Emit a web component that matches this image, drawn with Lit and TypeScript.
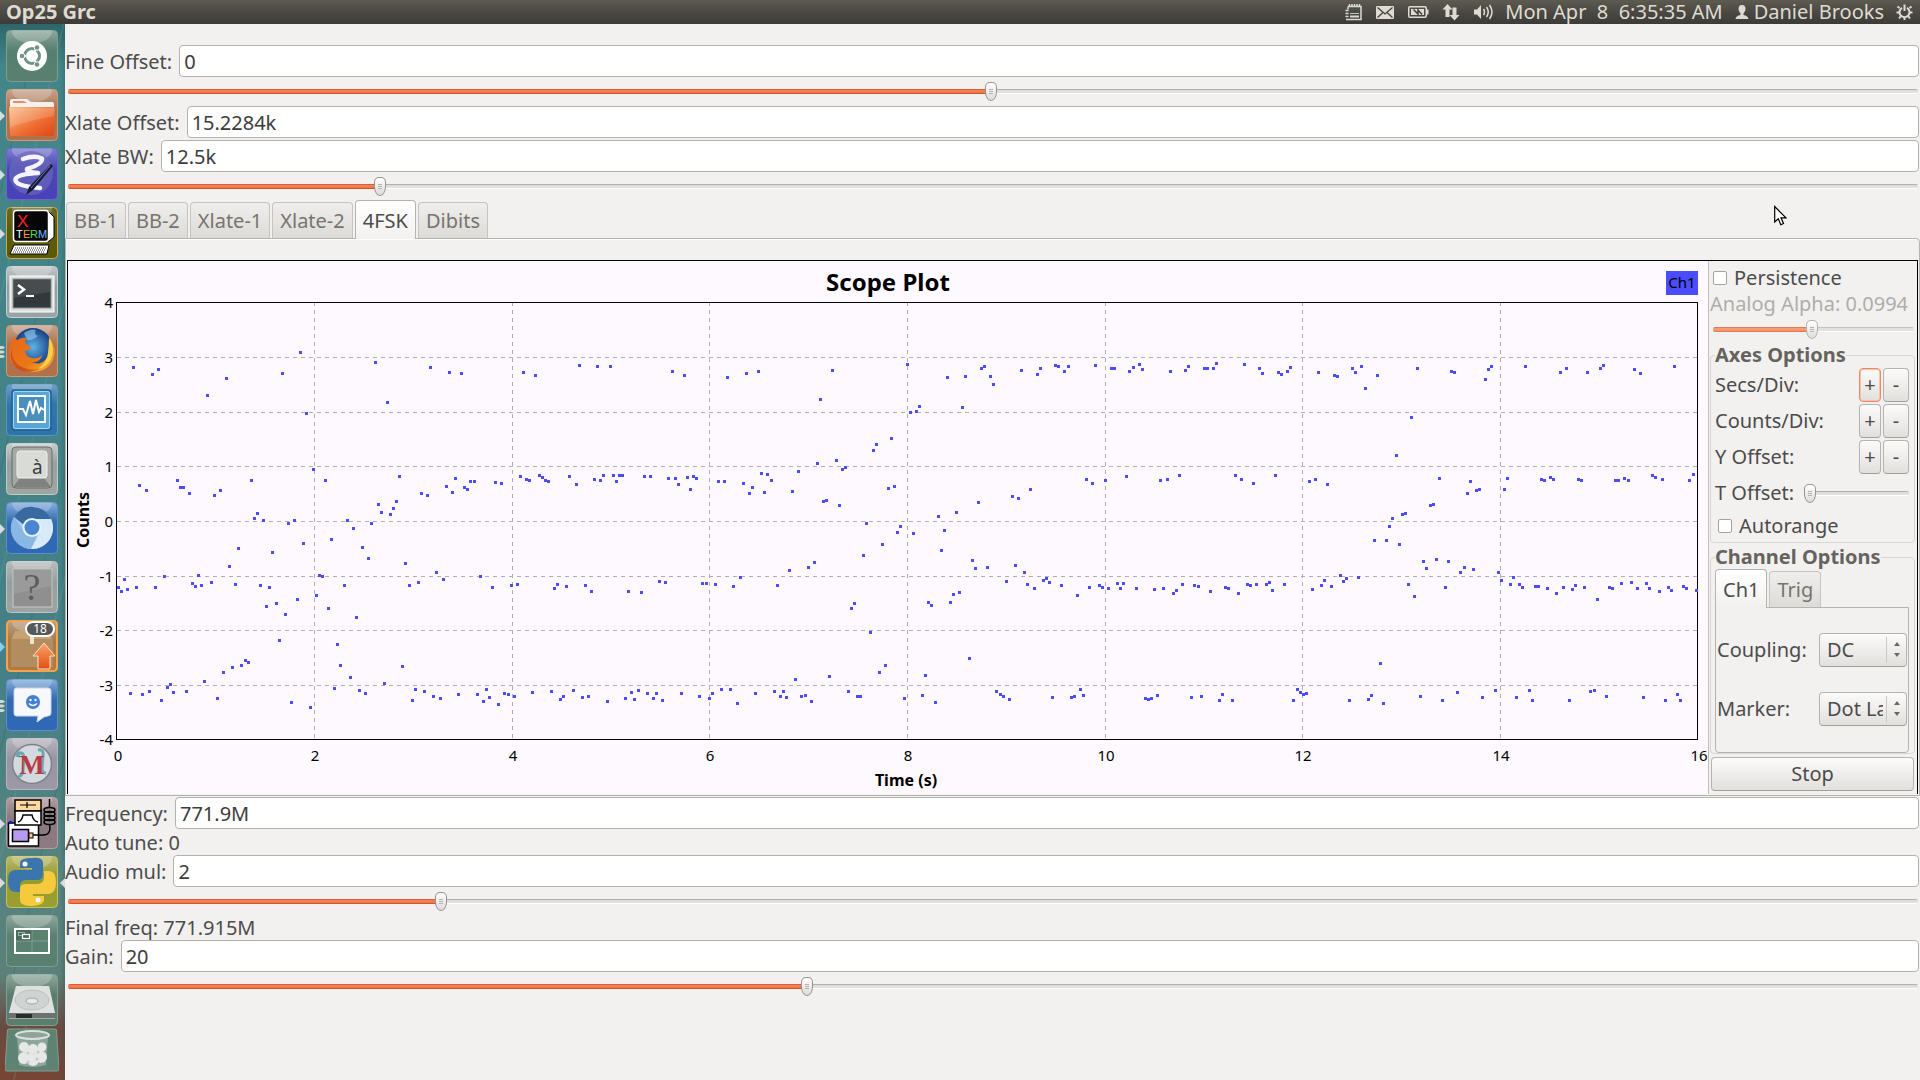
import { LitElement, html, svg, css, nothing } from "lit";
import type { TemplateResult } from "lit";
import { customElement, property, state } from "lit/decorators.js";
import { classMap } from "lit/directives/class-map.js";
import { styleMap } from "lit/directives/style-map.js";

/* ------------------------------------------------------------------ */
/* Scope trace: samples grouped by tile of the plotting area. Each tile */
/* has its own origin; samples are stored as "x,y" in raster units.     */
/* ------------------------------------------------------------------ */

interface Tile {
  x: number;
  y: number;
  samples: string;
}

const RASTER_X = 2.8;
const RASTER_Y = 3;

const TILES: Tile[] = [
  {
    x: -8,
    y: -1,
    samples:
      "206,322 259,343 276,328 413,406 466,355 623,340 673,277 690,460 883,307 917,427 1037,322 1090,337 1124,340 1298,337 1331,346 1454,316 1505,319 222,676 242,691 329,661 337,682 346,682 362,700 432,706 449,691 536,661 545,775 553,760 570,781 640,790 656,781 710,628 743,661 805,781 822,805 872,790 892,733 900,757 925,763 934,745 942,724 950,649 1012,700 1029,706 1082,679 1099,697 1107,655 1132,682 1141,688 1149,664 1160,664 1219,667 1236,670 1289,649 1306,658 1314,661 1342,646 1351,652 1359,661 1368,664 1426,649 1446,673 1496,658",
  },
  {
    x: -8,
    y: 269,
    samples:
      "164,172 172,184 180,148 189,178 214,172 267,172 292,139 371,160 379,169 388,136 396,166 424,157 474,109 491,163 500,55 561,166 578,229 586,172 595,67 606,220 614,331 631,253 665,208 682,40 717,196 727,136 735,139 752,235 760,28 777,343 785,406 796,166 813,442 830,262 838,481 847,52 855,490 864,85 908,460 959,409 967,100 978,166 987,511 995,478 1004,157 1020,484 1046,499 1054,127 1065,505 1074,148 1116,493 1169,493 1177,139 1186,514 1194,478 1202,502 1211,172 1228,523 1244,490 1256,493 1264,166 1272,499 1281,163 1323,487 1376,484 1384,175 1393,163 1401,508 1410,499 1418,169 1438,481 1463,502 1471,166 1480,499 1488,184 197,490 231,493 250,484 284,511 301,472 309,463 318,487 354,484 404,454 441,505 458,427 483,412 508,406 519,391 528,397 648,517 701,532 768,475",
  },
  {
    x: 532,
    y: -1,
    samples:
      "29,319 203,334 236,346 357,352 410,340 444,334 617,418 651,331 861,313 869,457 886,454 894,439 973,352 1015,442 1023,349 1068,325 1076,319 1093,349 1102,373 1180,331 1225,343 1233,325 1275,316 1284,319 1300,334 1312,319 1387,316 1432,325 1440,325 1482,334 1494,322 1510,313 1519,328 766,571 774,553 816,535 662,601 609,610 679,628 687,622 556,634 539,694 626,724 634,721 670,736 746,790 808,685 824,679 833,817 841,799 878,820 948,769 964,811 998,757 1060,727 1155,709 1172,715 1205,688 1362,658 1379,670 1415,661 1474,649 2,661 10,646 38,646 46,664 54,646 62,646 124,649 141,649 192,655 211,655 220,673 245,652 253,688 262,649 270,655 332,664 348,664 402,670 418,700 427,682 452,640 460,697 469,643 480,661",
  },
  {
    x: 532,
    y: 269,
    samples:
      "80,184 116,187 166,154 183,157 287,160 298,160 323,163 374,169 393,142 497,166 530,121 584,112 600,97 704,235 712,220 738,76 757,307 791,43 782,427 799,406 642,439 547,448 21,514 71,505 88,487 96,508 108,481 133,490 150,505 158,490 175,511 228,490 278,499 306,505 315,490 340,478 365,478 385,520 435,490 488,484 505,499 514,484 522,502 564,499 575,496 592,514 696,484 721,499 730,499 852,505 903,496 911,436 939,517 920,217 928,226 956,61 981,217 990,193 1006,187 1034,385 1043,91 1051,115 1085,112 1138,154 1163,106 1188,127 1197,163 1216,175 1242,151 1250,145 1258,157 1292,166 1337,196 1370,172 1398,166 1407,172 1424,175 1449,160 1457,175 1466,160 1502,175 1110,484 1121,493 1130,499 1146,508 1267,502 1320,502 1328,499 1345,478 1354,496 1527,505 1536,508",
  },
  {
    x: 1082,
    y: -1,
    samples:
      "57,334 99,331 108,319 152,325 161,325 178,325 186,310 264,313 306,325 315,340 360,337 368,343 385,334 393,322 472,337 516,346 525,349 567,325 575,337 592,319 603,385 637,346 749,325 732,472 690,586 844,334 852,337 939,358 948,328 956,319 1051,319 1149,337 1166,325 1225,337 1262,325 1270,316 1356,328 1373,340 1468,319 29,661 49,658 82,646 239,646 256,658 290,670 351,646 446,664 463,658 497,673 810,655 889,700 897,664 914,691 922,688 992,688 1001,655 1096,658 1104,661 1121,652 1130,658 1200,658 1208,661 1303,661 1312,661 1328,655 1340,661 1407,646 1415,652 1435,658 1510,661 1522,643 785,736 794,733 707,763 715,760 679,775 670,799",
  },
  {
    x: 1082,
    y: 269,
    samples:
      "12,178 38,175 66,190 74,181 91,163 124,166 136,169 169,184 211,172 220,175 248,190 273,163 281,166 298,163 326,163 334,157 343,181 376,163 455,178 480,166 488,151 508,169 533,136 542,154 550,145 584,142 628,31 662,31 698,43 724,163 740,199 766,94 774,115 802,88 836,94 827,172 869,127 880,112 906,118 976,127 984,151 1009,163 1018,142 1034,163 1043,172 1079,169 1088,169 1113,175 1138,190 1158,172 1183,178 1191,166 1216,172 1253,208 1286,172 1295,175 1320,160 1348,157 1365,175 1390,160 1398,175 1426,184 1452,172 1460,181 1494,169 1502,175 1530,181 4,505 21,496 116,502 144,499 194,511 203,493 231,511 402,511 413,478 421,487 430,493 438,490 558,511 612,508 620,496 645,400 654,520 757,499 819,511 861,487 931,502 967,481 1026,502 1062,481 1071,511 1174,511 1233,484 1245,481 1278,499 1382,502 1443,511 1477,493 1485,511",
  },
];

const tracePath = TILES.map((tile) =>
  tile.samples
    .split(" ")
    .map((pair) => {
      const [x, y] = pair.split(",").map(Number);
      const px = Math.floor(x / RASTER_X) + tile.x - 1;
      const py = Math.floor(y / RASTER_Y) + tile.y - 1;
      return `M${px} ${py}h3v3h-3z`;
    })
    .join(""),
).join("");

/* ------------------------------------------------------------------ */
/* Slider                                                               */
/* ------------------------------------------------------------------ */

@customElement("gtk-slider")
export class GtkSlider extends LitElement {
  @property() label = "";
  @property({ type: Number }) value = 0;
  @property({ type: Boolean }) disabled = false;

  static styles = css`
    :host {
      display: flex;
      align-items: center;
      min-width: 0;
    }
    .range {
      appearance: none;
      display: block;
      width: 100%;
      height: 19px;
      margin: 0;
      background: transparent;
      outline: none;
    }
    .range::-webkit-slider-runnable-track {
      box-sizing: border-box;
      height: 5px;
      border-radius: 2px;
      background:
        linear-gradient(#d95f33, #d95f33) 0 0 / var(--fill) 1px no-repeat,
        linear-gradient(#d1552a, #d1552a) 0 4px / var(--fill) 1px no-repeat,
        linear-gradient(#f58a5f, #ef6f42) 0 0 / var(--fill) 5px no-repeat,
        linear-gradient(#b2afac 1px, #dedcda 1px, #e4e2e0 4px, #ffffff 4px);
    }
    .range::-webkit-slider-thumb {
      appearance: none;
      box-sizing: border-box;
      width: 12px;
      height: 19px;
      margin-top: -7px;
      border: 1px solid #979490;
      border-radius: 5px 5px 6px 6px / 5px 5px 9px 9px;
      background:
        linear-gradient(#b5b2af, #b5b2af) 3px 6px / 4px 1px no-repeat,
        linear-gradient(#b5b2af, #b5b2af) 3px 8px / 4px 1px no-repeat,
        linear-gradient(#b5b2af, #b5b2af) 3px 10px / 4px 1px no-repeat,
        linear-gradient(#ffffff, #dedcda);
    }
    .range:disabled::-webkit-slider-runnable-track {
      background:
        linear-gradient(#e27a52, #e27a52) 0 0 / var(--fill) 1px no-repeat,
        linear-gradient(#e27a52, #e27a52) 0 4px / var(--fill) 1px no-repeat,
        linear-gradient(#f6a27c, #f29068) 0 0 / var(--fill) 5px no-repeat,
        linear-gradient(#c4c1be 1px, #e2e0de 1px, #e6e4e2 4px, #ffffff 4px);
    }
    .range:disabled::-webkit-slider-thumb {
      border-color: #b5b2af;
    }
  `;

  render() {
    return html`<input
      class="range"
      type="range"
      min="0"
      max="100"
      step="any"
      aria-label=${this.label}
      .value=${String(this.value)}
      ?disabled=${this.disabled}
      style=${styleMap({ "--fill": `${this.value}%` })}
      @input=${(e: Event) => {
        this.value = Number((e.target as HTMLInputElement).value);
      }}
    />`;
  }
}

/* ------------------------------------------------------------------ */
/* Top panel                                                            */
/* ------------------------------------------------------------------ */

@customElement("top-panel")
export class TopPanel extends LitElement {
  static styles = css`
    :host {
      display: flex;
      align-items: center;
      justify-content: space-between;
      height: 24px;
      padding: 0 7px 0 6px;
      background: linear-gradient(#5d5a4f, #4b4943 50%, #3c3b37);
      color: #dfdbd2;
      font-size: 20px;
      line-height: 24px;
    }
    .title {
      margin: 0;
      font-size: 20px;
      font-weight: bold;
      line-height: 24px;
    }
    .tray {
      display: flex;
      align-items: center;
      gap: 12px;
      white-space: pre;
    }
    .indicators {
      display: flex;
      gap: 13px;
    }
    .entry {
      display: flex;
      align-items: center;
      gap: 5px;
    }
    .glyph {
      display: block;
      height: 20px;
      fill: #dfdbd2;
      stroke: none;
    }
    .line {
      fill: none;
      stroke: #dfdbd2;
    }
    .cut {
      fill: none;
      stroke: #45433d;
    }
    .teal {
      fill: #9fd0cf;
    }
  `;

  render() {
    return html`
      <h1 class="title">Op25 Grc</h1>
      <div class="tray">
        <div class="indicators">
          <svg class="glyph" width="19" viewBox="0 0 19 20" aria-hidden="true">
            <path class="line" stroke-width="1.5" d="M4 4.5h13v13H3.500M4 4.500v3M1.500 8.500h3M1.500 11.500h3M1.500 14.500h3M2 17.500h3" />
            <path class="line" stroke-width="1.500" d="M5.500 5V2M8 5V2M10.500 5V2M13 5V2M15.500 5V2" />
            <path d="M6 13.500h9v2H6z" />
            <path class="teal" d="M6 11h9v1H6z" />
          </svg>
          <svg class="glyph" width="19" viewBox="0 0 19 20" aria-hidden="true">
            <rect y="4" width="18" height="13" rx="1" />
            <path class="cut" stroke-width="1.300" d="M1.500 5.500L9 12l7.500-6.500M1.500 15.500L7 10.500M16.500 15.500L11 10.500" />
          </svg>
          <svg class="glyph" width="21" viewBox="0 0 21 20" aria-hidden="true">
            <path fill-rule="evenodd" d="M2 4h15q2 0 2 2v1.500h1.500v5H19V14q0 2-2 2H2q-2 0-2-2V6q0-2 2-2zm0 1.500Q1.500 5.500 1.500 6v8q0 .5.5.5h15q.5 0 .5-.5V6q0-.5-.5-.5z" />
            <rect x="3" y="7" width="13" height="6" />
            <path class="cut" stroke-width="1.600" d="M5.500 7.500L10 12V8l4 4.500" />
          </svg>
          <svg class="glyph" width="18" viewBox="0 0 18 20" aria-hidden="true">
            <path d="M5.500 2l5 5.500h-3V15h-4V7.500h-3zM12.500 18.500l-5-5.500h3V5.500h4V13h3z" />
          </svg>
          <svg class="glyph" width="20" viewBox="0 0 20 20" aria-hidden="true">
            <path d="M1 7.500h3L8 3v14l-4-4.500H1z" />
            <path class="line" stroke-width="1.500" d="M10.500 7q2 3 0 6M13.500 5q3.500 5 0 10M16.500 3q5 7 0 14" />
          </svg>
        </div>
        <time>Mon Apr  8  6:35:35 AM</time>
        <span class="entry">
          <svg class="glyph" width="14" viewBox="0 0 14 20" aria-hidden="true">
            <path d="M7 3q3.500 0 3.500 4 0 2.500-2 4.500v1.500q4.500.8 5 4H.5q.5-3.200 5-4v-1.500q-2-2-2-4.500 0-4 3.500-4z" />
          </svg>
          <span>Daniel Brooks</span>
        </span>
        <svg class="glyph" width="17" viewBox="0 0 17 20" aria-hidden="true">
          <path class="line" stroke-width="2" d="M6 5.800a5 5 0 1 0 5 0M8.500 2.500V9M3.500 6L1.500 4.500M13.500 6l2-1.500M3 10.500H.5M14 10.500h2.500M4.500 14.500l-1.500 2M12.500 14.500l1.500 2M8.500 15.500V18" />
        </svg>
      </div>
    `;
  }
}

/* ------------------------------------------------------------------ */
/* Launcher                                                             */
/* ------------------------------------------------------------------ */

interface LaunchItem {
  name: string;
  top: string;
  bottom: string;
  edge: string;
  mark?: "one" | "many" | "urgent";
  active?: boolean;
  badge?: string;
  art: TemplateResult;
}

const GREEN = { top: "#8fa89c", bottom: "#597f6f", edge: "#7f9f92" };
const TAN = { top: "#c8a48c", bottom: "#b3704a", edge: "#cf9a76" };
const BLUE = { top: "#86aedb", bottom: "#2f68b5", edge: "#5d8fcb" };
const GREY = { top: "#c9cdcc", bottom: "#9fa6a2", edge: "#c5cac7" };

const ITEMS: LaunchItem[] = [
  {
    name: "Dash home",
    ...GREEN,
    art: svg`
      <circle cx="26" cy="26" r="15" fill="#fff"/>
      <circle cx="26" cy="26" r="7.500" fill="none" stroke="#6f9386" stroke-width="3"/>
      <g stroke="#fff" stroke-width="1.500"><path d="M26 26L14 26M26 26L32 36M26 26L32 16"/></g>
      <circle cx="26" cy="26" r="5" fill="#fff"/>
      <g fill="#6f9386" stroke="#fff" stroke-width="1">
        <circle cx="16" cy="26" r="2.800"/><circle cx="31" cy="17.500" r="2.800"/><circle cx="31" cy="34.500" r="2.800"/>
      </g>`,
  },
  {
    name: "Home folder",
    ...TAN,
    mark: "one",
    art: svg`
      <path d="M4 19V12q0-2 2-2h15l4 3h21q2 0 2 2v4z" fill="#f3f1ef"/>
      <path d="M7 12h11l3 2H7z" fill="#ef8b5a"/>
      <path d="M3 18h46l-1 27q0 2-2 2H6q-2 0-2-2z" fill="url(#folder)"/>
      <path d="M3.500 19h45l-.3 8Q25 31 4 38z" fill="#fff" opacity=".16"/>`,
  },
  {
    name: "Emacs",
    top: "#7f7fd0",
    bottom: "#4a41b8",
    edge: "#6a66cc",
    mark: "one",
    art: svg`
      <circle cx="25" cy="25" r="22" fill="#6a67bd" opacity=".7"/>
      <path d="M17 11Q28 7 36 10.500 37 16 21 21q-1 3 11 4-20 1-22.500 6Q8 38 34 40" fill="none" stroke="#f4f4fb" stroke-width="4.500" stroke-linecap="round" stroke-linejoin="round"/>
      <path d="M45 16l2 2-20 24-7 5 3-8z" fill="#171a33"/>
      <path d="M44 18L25 40" stroke="#6d74a3" stroke-width="1"/>`,
  },
  {
    name: "XTerm",
    top: "#6b6a25",
    bottom: "#5d5903",
    edge: "#c9a953",
    mark: "one",
    art: svg`
      <path d="M42 4l6 6v20l-6 5z" fill="#fff" stroke="#000" stroke-width="1"/>
      <rect x="7.500" y="3.500" width="35" height="31" rx="3" fill="#060606" stroke="#fff" stroke-width="1.500"/>
      <g font-family="'Liberation Sans', sans-serif">
        <text x="11" y="20" font-size="17" fill="#ff2020">X</text>
        <g font-size="11"><text x="10" y="31" fill="#fff">T</text><text x="17" y="31" fill="#ff9a3c">E</text><text x="24" y="31" fill="#4be04b">R</text><text x="32" y="31" fill="#6fb7ff">M</text></g>
      </g>
      <path d="M8 38h35l-2 9H4z" fill="#fff" stroke="#000" stroke-width="1"/>
      <path d="M9 41h31M8 43h31M7 45h31" stroke="#333" stroke-width="1" stroke-dasharray="1 1"/>`,
  },
  {
    name: "Terminal",
    top: "#c2c8c9",
    bottom: "#9aa3a4",
    edge: "#c8cdce",
    art: svg`
      <rect x="4" y="10" width="44" height="36" fill="#dcdddc" stroke="#fff"/>
      <rect x="7" y="13" width="38" height="29" fill="#33393b" stroke="#8e9392"/>
      <path d="M8 14h36v12L8 32z" fill="#fff" opacity=".1"/>
      <path d="M12 19l6 4.500-6 4.500" fill="none" stroke="#fff" stroke-width="2.500"/>
      <path d="M20 30h8" stroke="#fff" stroke-width="2"/>`,
  },
  {
    name: "Firefox",
    ...TAN,
    mark: "many",
    art: svg`
      <circle cx="27" cy="22" r="19" fill="url(#globe)"/>
      <path d="M18 8q7-5 12-3-3 4 2 6-6 5-11 4z" fill="#9fd0f0" opacity=".6"/>
      <path d="M44 13q8 10 3 22-6 12-20 12T5 37Q0 24 7 14l1-3 3 4q5-3 10-2-3 3-1 6l5 3q-1 3-6 4 1 6 7 7 6 1 10-3-2 8-10 7 8 4 14-3 6-8 4-21z" fill="url(#fox)"/>
      <path d="M43 12q8 12 1 24-5 7-12 8 9-7 10-16 1-9 1-16z" fill="#f8d048"/>
      <path d="M6 22q-2 14 10 20 10 5 18 1-12 7-22 1Q2 36 6 22z" fill="#c9400f" opacity=".7"/>`,
  },
  {
    name: "System Monitor",
    top: "#6f9fc8",
    bottom: "#2d74ab",
    edge: "#5b96c4",
    art: svg`
      <rect x="6" y="6" width="39" height="40" rx="3" fill="#56a6d8" stroke="#245f8e" stroke-width="1.500"/>
      <rect x="7.500" y="7.500" width="36" height="37" rx="2" fill="none" stroke="#9fd4f2"/>
      <rect x="12" y="12" width="27" height="26" fill="#4a8ebb" stroke="#fff" stroke-width="2"/>
      <path d="M13 25h4l3 6 4-14 3 13 3-14 3 12 2-4 3 2" fill="none" stroke="#fff" stroke-width="2"/>`,
  },
  {
    name: "Keyboard layout",
    ...GREY,
    art: svg`
      <rect x="6" y="4" width="40" height="41" rx="4" fill="#a7a9a5" stroke="#696b68"/>
      <path d="M7 44L14 35h24l7 9z" fill="#7f827e"/>
      <rect x="11" y="8" width="30" height="27" rx="3" fill="#d8dbd6" stroke="#f1f2f0"/>
      <text x="26" y="31" font-family="'Noto Sans', sans-serif" font-size="19" fill="#3b3d3b">à</text>`,
  },
  {
    name: "Chromium",
    ...BLUE,
    mark: "one",
    art: svg`
      <circle cx="26" cy="26" r="21" fill="#a8cdf0"/>
      <path d="M8 15A21 21 0 0 1 45 17H26a9 9 0 0 0-8 6z" fill="#386a9f"/>
      <path d="M45 17a21 21 0 0 1-20 30l9-17q2-7-4-13z" fill="#d8eaf9"/>
      <path d="M8 15A21 21 0 0 0 25 47l6-13q-9 2-14-6z" fill="#8ab8e4"/>
      <circle cx="26" cy="25.500" r="9.500" fill="#e9f3fc"/>
      <circle cx="26" cy="25.500" r="7.500" fill="#4a85cf"/>`,
  },
  {
    name: "Unknown application",
    top: "#b9bcba",
    bottom: "#9da3a0",
    edge: "#bfc3c1",
    art: svg`
      <rect x="7" y="8" width="39" height="38" fill="#8f8f8f" stroke="#c7c7c7"/>
      <path d="M8 9h37v16L8 33z" fill="#fff" opacity=".1"/>
      <text x="26" y="39" text-anchor="middle" font-family="'Liberation Serif', serif" font-size="38" fill="#5c5c5c">?</text>`,
  },
  {
    name: "Update Manager",
    top: "#b9a088",
    bottom: "#b07a42",
    edge: "#f7a24a",
    mark: "urgent",
    badge: "18",
    art: svg`
      <rect x="1" y="1" width="50" height="50" rx="4" fill="none" stroke="#f7a24a" stroke-width="2"/>
      <path d="M9 11h33l5 9v26q0 1-1 1H6q-1 0-1-1V20z" fill="#c6a273"/>
      <path d="M5 19h42v27q0 1-1 1H6q-1 0-1-1z" fill="#b28d5f"/>
      <path d="M24 14h4v10h-4z" fill="#efe3cf"/>
      <path d="M38 23l11 13h-5v13H32V36h-5z" fill="url(#arrow)" stroke="#fbe3c8"/>`,
  },
  {
    name: "Empathy",
    ...BLUE,
    mark: "many",
    art: svg`
      <path d="M10 9h32q3 0 3 3v22q0 3-3 3l-4 1-7 5 1-6H10q-2 0-2-3V12q0-3 2-3z" fill="#f6f8fb" stroke="#c7d4e6"/>
      <circle cx="27" cy="23" r="7" fill="#3f7fd0"/>
      <circle cx="24.500" cy="21" r="1.200" fill="#fff"/><circle cx="29.500" cy="21" r="1.200" fill="#fff"/>
      <path d="M23 24.500q4 4 8 0" fill="none" stroke="#fff" stroke-width="1.500"/>`,
  },
  {
    name: "Mendeley",
    top: "#b9b4bd",
    bottom: "#9d98a5",
    edge: "#b9b5c0",
    art: svg`
      <circle cx="26" cy="26" r="19.500" fill="#d3d9df" stroke="#7c828c" stroke-width="1.500"/>
      <path d="M14 18q-6 0-2-3 5-1 6 4l-1 14q-1 6-5 5M32 12q6-1 5 5l-1 14q0 4 4 4" fill="none" stroke="#6ea6b0" stroke-width="3"/>
      <text x="26" y="36" text-anchor="middle" font-family="'Liberation Serif', serif" font-weight="bold" font-size="27" fill="#b93a42">M</text>`,
  },
  {
    name: "GNU Radio Companion",
    top: "#b59ea1",
    bottom: "#8f7a80",
    edge: "#b5a1a5",
    mark: "one",
    art: svg`
      <rect x="2.500" y="26" width="30" height="23" fill="#fff" stroke="#000" stroke-width="1.500"/>
      <rect x="6.500" y="32.500" width="16" height="12" fill="#b79bf0" stroke="#000" stroke-width="1.500"/>
      <rect x="23" y="36" width="4" height="5" fill="#ffc586" stroke="#000"/>
      <rect x="9" y="3" width="26" height="11" fill="#ffd8a2" stroke="#000" stroke-width="1.500"/>
      <path d="M14 8h16M21 5v6" stroke="#000" stroke-width="1.200"/>
      <rect x="9" y="14" width="26" height="14" fill="#fff" stroke="#000" stroke-width="1.500"/>
      <path d="M12 25q4-1 5-7h9q1 6 6 7" fill="none" stroke="#000" stroke-width="1.500"/>
      <path d="M3 24h3v3H3z" fill="#1a1ae0"/>
      <g fill="none" stroke="#000" stroke-width="1.500"><ellipse cx="43.500" cy="13" rx="5.500" ry="2.500"/><ellipse cx="43.500" cy="17" rx="5.500" ry="2.500"/><ellipse cx="43.500" cy="21" rx="5.500" ry="2.500"/><ellipse cx="43.500" cy="25" rx="5.500" ry="2.500"/><path d="M43.500 2v9M43.500 27q2 11-6 11H27"/></g>`,
  },
  {
    name: "Python",
    top: "#bcb96c",
    bottom: "#9aa02e",
    edge: "#c3c169",
    mark: "one",
    active: true,
    art: svg`
      <path d="M26 2q11-1 11 5v11q0 6-6 6H20q-6 0-6 6v6h-5Q2 36 2 25T9 14h17v-2H14V7q0-5 12-5z" fill="#3a75ad"/>
      <path d="M27 50q-13 0-13-6V33q0-5 6-5h11q7 0 7-7v-6h5q7 0 7 11t-7 12H27v2h11v4q0 5-11 6z" fill="#f7c93c"/>
      <circle cx="19" cy="8" r="2.500" fill="#fff"/><circle cx="32" cy="44" r="2.500" fill="#fff"/>`,
  },
  {
    name: "Workspace Switcher",
    ...GREEN,
    art: svg`
      <rect x="9" y="14" width="34" height="24" fill="#5b8271" stroke="#fff" stroke-width="2"/>
      <rect x="10" y="15" width="16" height="11" fill="#4a6a5d"/>
      <path d="M26 15v22M10 26h32" stroke="#7f9d90"/>
      <rect x="12.500" y="17.500" width="6" height="3" fill="none" stroke="#9bb0a7"/>
      <rect x="16.500" y="19.500" width="7" height="4" fill="#50655d" stroke="#fff" stroke-width="1.200"/>`,
  },
  {
    name: "Hard disk",
    ...GREEN,
    art: svg`
      <path d="M10 12h33l6 27v6H3v-6z" fill="#a6aba9"/>
      <path d="M10 12h33l6 27H3z" fill="#dfe1e0"/>
      <ellipse cx="26" cy="26" rx="17" ry="10" fill="#cfd3d1" stroke="#bcc0be"/>
      <ellipse cx="26" cy="27" rx="6" ry="3" fill="#e7e9e8" stroke="#9fa4a1"/>
      <path d="M3 39h46v5H3z" fill="#6c7270"/><path d="M10 40h16v4H10z" fill="#282c2b"/>`,
  },
];

@customElement("app-launcher")
export class AppLauncher extends LitElement {
  static styles = css`
    :host {
      display: block;
      box-sizing: border-box;
      width: 65px;
      background:
        repeating-linear-gradient(103deg, transparent 0 37px, #2c5c6033 37px 39px, transparent 39px 61px, #6ba1a033 61px 63px),
        linear-gradient(90deg, transparent 60px, #1f4d5044),
        linear-gradient(#2d666a, #43868a 4%, #448086 62%, #56837f 80%, #5c807a 90%, #6d4a3e 95%, #774435);
    }
    .list {
      display: flex;
      flex-direction: column;
      gap: 7px;
      margin: 0;
      padding: 6px 0 0;
      list-style: none;
    }
    .slot {
      position: relative;
      display: flex;
      justify-content: center;
      padding-right: 1px;
    }
    .tight {
      margin-top: -5px;
    }
    .launch {
      display: block;
      padding: 0;
      border: 0;
      background: none;
    }
    .tile {
      display: block;
    }
    .mark {
      position: absolute;
      top: 21px;
      left: 0;
      display: block;
    }
    .mark-active {
      left: auto;
      right: 0;
    }
    .badge {
      position: absolute;
      top: 1px;
      left: 25px;
      box-sizing: border-box;
      width: 30px;
      border: 2px solid #ffffff;
      border-radius: 8px;
      background: #57585a;
      color: #ffffff;
      font-size: 12px;
      line-height: 12px;
      text-align: center;
    }
  `;

  private mark(kind: LaunchItem["mark"]) {
    if (!kind) return nothing;
    const shape =
      kind === "many"
        ? svg`<path d="M0 0h3l2 1.500-2 1.500H0zM0 4.500h3l2 1.500-2 1.500H0zM0 9h3l2 1.500-2 1.500H0z" fill="#cfd6d6"/>`
        : svg`<path d="M0 1l5 5-5 5z" fill=${kind === "urgent" ? "#7fd0f5" : "#d8dcdc"}/>`;
    return html`<svg class="mark" width="5" height="12" viewBox="0 0 5 12" aria-hidden="true">${shape}</svg>`;
  }

  render() {
    return html`
      <nav aria-label="Launcher">
        <ul class="list">
          ${ITEMS.map(
            (item, i) => html`
              <li class="slot">
                ${this.mark(item.mark)}
                <button class="launch" aria-label=${item.name}>
                  <svg class="tile" width="52" height="52" viewBox="0 0 52 52" aria-hidden="true">
                    <defs>
                      <linearGradient id="tile${i}" x2="0" y2="1">
                        <stop offset="0" stop-color=${item.top} /><stop offset=".4" stop-color=${item.bottom} stop-opacity=".9" /><stop offset="1" stop-color=${item.bottom} />
                      </linearGradient>
                      <linearGradient id="folder" x2="1" y2="1"><stop offset="0" stop-color="#fbc08a" /><stop offset=".6" stop-color="#ee6a30" /><stop offset="1" stop-color="#dd4814" /></linearGradient>
                      <linearGradient id="fox" x2="1" y2="1"><stop offset="0" stop-color="#e8661c" /><stop offset=".6" stop-color="#e97818" /><stop offset="1" stop-color="#f6c23a" /></linearGradient>
                      <radialGradient id="globe"><stop offset="0" stop-color="#5fb4e6" /><stop offset="1" stop-color="#173f86" /></radialGradient>
                      <linearGradient id="arrow" x2="0" y2="1"><stop offset="0" stop-color="#fba268" /><stop offset="1" stop-color="#e24f12" /></linearGradient>
                    </defs>
                    <rect x=".5" y=".5" width="51" height="51" rx="4" fill="url(#tile${i})" stroke=${item.edge} />
                    <ellipse cx="26" cy="2" rx="20" ry="11" fill="#fff" opacity=".22" />
                    ${item.art}
                  </svg>
                </button>
                ${item.badge ? html`<span class="badge">${item.badge}</span>` : nothing}
                ${item.active
                  ? html`<svg class="mark mark-active" width="5" height="12" viewBox="0 0 5 12" aria-hidden="true"><path d="M5 1L0 6l5 5z" fill="#d8dcdc" /></svg>`
                  : nothing}
              </li>
            `,
          )}
          <li class="slot tight">
            <button class="launch" aria-label="Trash">
              <svg class="tile" width="54" height="44" viewBox="0 0 54 44" aria-hidden="true">
                <path d="M4 1h46q1 0 1.500 1L54 41q0 2-2 2H2q-2 0-2-2L2.500 2Q3 1 4 1z" fill="#5f8373" stroke="#7f9f92" />
                <path d="M12 8h31l-2 29q-13 4-27 0z" fill="#bcc8c4" opacity=".5" />
                <ellipse cx="27.500" cy="7" rx="16.500" ry="4" fill="#8fa39b" stroke="#d9e0dd" stroke-width="2" />
                <g fill="#e6e8e7"><circle cx="19" cy="19" r="5" /><circle cx="28" cy="21" r="5" /><circle cx="37" cy="19" r="4.500" /><circle cx="19" cy="30" r="6" /><circle cx="28" cy="32" r="6" /><circle cx="36" cy="29" r="6" /><circle cx="24" cy="25" r="4" /><circle cx="33" cy="25" r="4" /></g>
                <g fill="#c4cac7"><circle cx="23" cy="25" r="1.500" /><circle cx="33" cy="24" r="1.500" /><circle cx="23" cy="34" r="1.500" /><circle cx="32" cy="31" r="1.500" /></g>
              </svg>
            </button>
          </li>
        </ul>
      </nav>
    `;
  }
}

/* ------------------------------------------------------------------ */
/* Scope plot                                                           */
/* ------------------------------------------------------------------ */

const PLOT = { left: 49, right: 1630, top: 41, bottom: 478 };
const X_TICKS = [0, 2, 4, 6, 8, 10, 12, 14, 16];
const Y_TICKS = [4, 3, 2, 1, 0, -1, -2, -3, -4];

@customElement("scope-plot")
export class ScopePlot extends LitElement {
  static styles = css`
    :host {
      display: block;
      min-width: 0;
      background: #fef8ff;
    }
    .plot {
      display: block;
      width: 100%;
      height: auto;
      fill: #000000;
      font-size: 15px;
    }
    .grid {
      fill: none;
      stroke: #b3aeb3;
      stroke-width: 1;
      stroke-dasharray: 4 4;
      shape-rendering: crispEdges;
    }
    .frame {
      fill: none;
      stroke: #000000;
      shape-rendering: crispEdges;
    }
    .trace,
    .key {
      fill: #4c4cff;
      shape-rendering: crispEdges;
    }
    .title {
      font-size: 24px;
      font-weight: bold;
    }
    .axis {
      font-size: 16px;
      font-weight: bold;
    }
    .mid {
      text-anchor: middle;
    }
    .end {
      text-anchor: end;
    }
  `;

  render() {
    const xs = X_TICKS.map((t) => Math.floor(PLOT.left + ((PLOT.right - PLOT.left) * t) / 16));
    const ys = Y_TICKS.map((v) => Math.ceil(PLOT.top + ((PLOT.bottom - PLOT.top) * (4 - v)) / 8));
    return html`
      <svg class="plot" viewBox="0 0 1640 533" role="img" aria-label="Scope Plot">
        <text class="title mid" x="820" y="30">Scope Plot</text>
        <rect class="key" x="1598" y="10" width="32" height="24" />
        <text class="mid" x="1614" y="27">Ch1</text>
        ${xs.slice(1, -1).map((x) => svg`<path class="grid" d="M${x + 0.5} ${PLOT.top}V${PLOT.bottom}"/>`)}
        ${ys.slice(1, -1).map((y) => svg`<path class="grid" d="M${PLOT.left} ${y + 0.5}H${PLOT.right}"/>`)}
        <path class="frame" d="M${PLOT.left - 0.5} ${PLOT.top + 0.5}H${PLOT.right - 0.5}V${PLOT.bottom + 0.5}H${PLOT.left - 0.5}z" />
        <path class="trace" d=${tracePath} />
        ${xs.map((x, i) => svg`<text class="mid" x=${x + 1} y="500">${X_TICKS[i]}</text>`)}
        ${ys.map((y, i) => svg`<text class="end" x="45" y=${y + 6}>${Y_TICKS[i]}</text>`)}
        <text class="axis mid" x="838" y="525">Time (s)</text>
        <text class="axis mid" transform="translate(21 259) rotate(-90)">Counts</text>
      </svg>
    `;
  }
}

/* ------------------------------------------------------------------ */
/* Shared look of tabs, labels and buttons                              */
/* ------------------------------------------------------------------ */

const widgets = css`
  .tabs {
    position: relative;
    display: flex;
    align-items: flex-end;
    gap: 2px;
    height: 38px;
  }
  .tab {
    box-sizing: border-box;
    height: 36px;
    padding: 0 7px;
    border: 1px solid #c6c3c0;
    border-bottom: 0;
    border-radius: 4px 4px 0 0;
    background: linear-gradient(#efeeec, #dddbd8);
    color: #77746f;
    font: inherit;
    line-height: 35px;
    white-space: nowrap;
  }
  .tab-on {
    height: 39px;
    margin-bottom: -1px;
    border-color: #b5b2af;
    background: linear-gradient(#ffffff, #f2f1f0);
    color: #4c4c4c;
  }
  .push {
    box-sizing: border-box;
    height: 34px;
    padding: 0;
    border: 1px solid #b5b2af;
    border-bottom-color: #a09d9a;
    border-radius: 4px;
    background: linear-gradient(#fbfbfa, #e2e0dd);
    color: #4c4c4c;
    font: inherit;
  }
`;

@customElement("scope-controls")
export class ScopeControls extends LitElement {
  static styles = [
    widgets,
    css`
      :host {
        display: flex;
        flex-direction: column;
        box-sizing: border-box;
        width: 209px;
        padding: 4px 2px 0 1px;
        border-left: 1px solid #c1bebb;
        background: #f2f1f0;
        line-height: 26px;
      }
      .check {
        display: flex;
        align-items: center;
        gap: 7px;
        padding-left: 3px;
      }
      .box {
        appearance: none;
        box-sizing: border-box;
        width: 14px;
        height: 14px;
        margin: 0;
        border: 1px solid #a5a29f;
        border-radius: 2px;
        background: #ffffff;
      }
      .dim {
        color: #b0ada9;
        white-space: nowrap;
      }
      .alpha {
        height: 24px;
        padding: 0 1px 0 3px;
      }
      .group {
        display: block;
        min-width: 0;
        margin: 1px 0 0;
        padding: 0 5px 0 4px;
        border: 1px solid #d8d6d3;
        border-radius: 4px;
      }
      .name {
        padding: 0;
        color: #66635f;
        font-weight: bold;
        line-height: 26px;
      }
      .row {
        display: flex;
        align-items: center;
        gap: 2px;
        height: 34px;
        margin-bottom: 2px;
      }
      .grow {
        flex: 1;
      }
      .plus {
        width: 22px;
      }
      .minus {
        width: 26px;
      }
      .focus {
        border-color: #f08763;
        box-shadow: inset 0 0 0 1px #f8c3ae;
      }
      .shift {
        flex: 1;
        margin-left: 8px;
      }
      .auto {
        height: 32px;
        margin-top: -2px;
      }
      .channels {
        margin-top: -1px;
      }
      .pane {
        display: flex;
        flex-direction: column;
        gap: 25px;
        padding: 25px 1px 26px;
        border: 1px solid #b5b2af;
        border-radius: 0 0 4px 4px;
      }
      .pick {
        display: grid;
        grid-template-columns: 1fr 88px;
        align-items: center;
      }
      .combo {
        position: relative;
        display: flex;
      }
      .select {
        appearance: none;
        flex: 1;
        min-width: 0;
        padding: 0 23px 0 7px;
        text-align: left;
      }
      .arrows {
        position: absolute;
        top: 4px;
        right: 0;
        display: block;
        pointer-events: none;
      }
      .stop {
        margin: 3px 1px 0;
      }
    `,
  ];

  @state() private page = "Ch1";

  private combo(id: string, label: string, options: string[]) {
    return html`
      <div class="pick">
        <label for=${id}>${label}</label>
        <span class="combo">
          <select class="push select" id=${id}>
            ${options.map((o) => html`<option>${o}</option>`)}
          </select>
          <svg class="arrows" width="21" height="26" viewBox="0 0 21 26" aria-hidden="true">
            <path d="M.5 0v26" stroke="#c9c6c3" />
            <path d="M8 9h6l-3-4zM8 16h6l-3 4z" fill="#6b6863" />
          </svg>
        </span>
      </div>
    `;
  }

  render() {
    return html`
      <label class="check"><input class="box" type="checkbox" />Persistence</label>
      <div class="dim">Analog Alpha: 0.0994</div>
      <gtk-slider class="alpha" label="Analog Alpha" .value=${49} disabled></gtk-slider>
      <fieldset class="group">
        <legend class="name">Axes Options</legend>
        ${["Secs/Div:", "Counts/Div:", "Y Offset:"].map(
          (label, i) => html`
            <div class="row">
              <span class="grow">${label}</span>
              <button class=${classMap({ push: true, plus: true, focus: i === 0 })} aria-label="${label} increase">+</button>
              <button class="push minus" aria-label="${label} decrease">-</button>
            </div>
          `,
        )}
        <div class="row">
          <span>T Offset:</span>
          <gtk-slider class="shift" label="T Offset" .value=${0}></gtk-slider>
        </div>
        <label class="check auto"><input class="box" type="checkbox" />Autorange</label>
      </fieldset>
      <fieldset class="group">
        <legend class="name">Channel Options</legend>
        <div class="tabs channels" role="tablist">
          ${["Ch1", "Trig"].map(
            (name) => html`<button
              role="tab"
              aria-selected=${name === this.page}
              class=${classMap({ tab: true, "tab-on": name === this.page })}
              @click=${() => (this.page = name)}
            >${name}</button>`,
          )}
        </div>
        <div class="pane" role="tabpanel">
          ${this.combo("coupling", "Coupling:", ["DC", "AC"])}
          ${this.combo("marker", "Marker:", ["Dot Large", "Dot Med", "Dot Small", "Line Link"])}
        </div>
      </fieldset>
      <button class="push stop">Stop</button>
    `;
  }
}

/* ------------------------------------------------------------------ */
/* Application                                                          */
/* ------------------------------------------------------------------ */

@customElement("app-root")
export class AppRoot extends LitElement {
  static styles = [
    widgets,
    css`
      :host {
        position: relative;
        display: flex;
        flex-direction: column;
        min-height: 100vh;
        background: #f2f1f0;
        color: #4c4c4c;
        font-family: "Noto Sans", "Open Sans", sans-serif;
        font-size: 20px;
        line-height: 24px;
      }
      .body {
        display: flex;
        flex: 1;
      }
      .launcher {
        flex: none;
      }
      .main {
        flex: 1;
        min-width: 0;
        padding-top: 20px;
      }
      .field {
        display: flex;
        align-items: center;
        gap: 7px;
        height: 34px;
        padding-right: 1px;
      }
      .caption {
        padding-top: 2px;
      }
      .entry {
        box-sizing: border-box;
        flex: 1;
        min-width: 0;
        height: 32px;
        padding: 0 4px;
        border: 1px solid #b4b1ae;
        border-radius: 4px;
        background: #ffffff;
        color: #3c3c3c;
        font: inherit;
        outline: none;
      }
      .slider {
        height: 27px;
        padding: 0 2px 0 3px;
      }
      .note {
        height: 24px;
        margin: 0;
        line-height: 26px;
      }
      .strip {
        padding-left: 1px;
      }
      .pane {
        padding: 21px 1px 1px;
        border: 1px solid #b5b2af;
        border-radius: 0 4px 0 0;
        box-shadow: inset 0 1px #ffffff;
      }
      .scope {
        display: flex;
        border: 1px solid #000000;
        border-bottom: 0;
      }
      .plot {
        flex: 1;
      }
      .pointer {
        position: absolute;
        top: 205px;
        left: 1774px;
        display: block;
        pointer-events: none;
      }
    `,
  ];

  @state() private page = "4FSK";

  private field(id: string, label: string, value: string) {
    return html`
      <div class="field">
        <label class="caption" for=${id}>${label}</label>
        <input class="entry" id=${id} type="text" .value=${value} />
      </div>
    `;
  }

  private slider(label: string, value: number) {
    return html`<gtk-slider class="slider" .label=${label} .value=${value}></gtk-slider>`;
  }

  render() {
    return html`
      <top-panel></top-panel>
      <div class="body">
        <app-launcher class="launcher"></app-launcher>
        <main class="main">
          ${this.field("fine", "Fine Offset:", "0")}
          ${this.slider("Fine Offset", 49.9)}
          ${this.field("xlate", "Xlate Offset:", "15.2284k")}
          ${this.field("bw", "Xlate BW:", "12.5k")}
          ${this.slider("Xlate BW", 16.65)}
          <div class="tabs strip" role="tablist">
            ${["BB-1", "BB-2", "Xlate-1", "Xlate-2", "4FSK", "Dibits"].map(
              (name) => html`<button
                role="tab"
                aria-selected=${name === this.page}
                class=${classMap({ tab: true, "tab-on": name === this.page })}
                @click=${() => (this.page = name)}
              >${name}</button>`,
            )}
          </div>
          <section class="pane" role="tabpanel">
            <div class="scope">
              <scope-plot class="plot"></scope-plot>
              <scope-controls></scope-controls>
            </div>
          </section>
          ${this.field("freq", "Frequency:", "771.9M")}
          <p class="note">Auto tune: 0</p>
          ${this.field("audio", "Audio mul:", "2")}
          ${this.slider("Audio mul", 19.95)}
          <p class="note">Final freq: 771.915M</p>
          ${this.field("gain", "Gain:", "20")}
          ${this.slider("Gain", 39.9)}
        </main>
      </div>
      <svg class="pointer" width="13" height="21" viewBox="0 0 13 21" aria-hidden="true">
        <path d="M.7 1.500v15.500l3.600-3.300 2.500 6 2.700-1.200-2.500-5.700h5z" fill="#fff" stroke="#000" stroke-width="1.200" />
      </svg>
    `;
  }
}
